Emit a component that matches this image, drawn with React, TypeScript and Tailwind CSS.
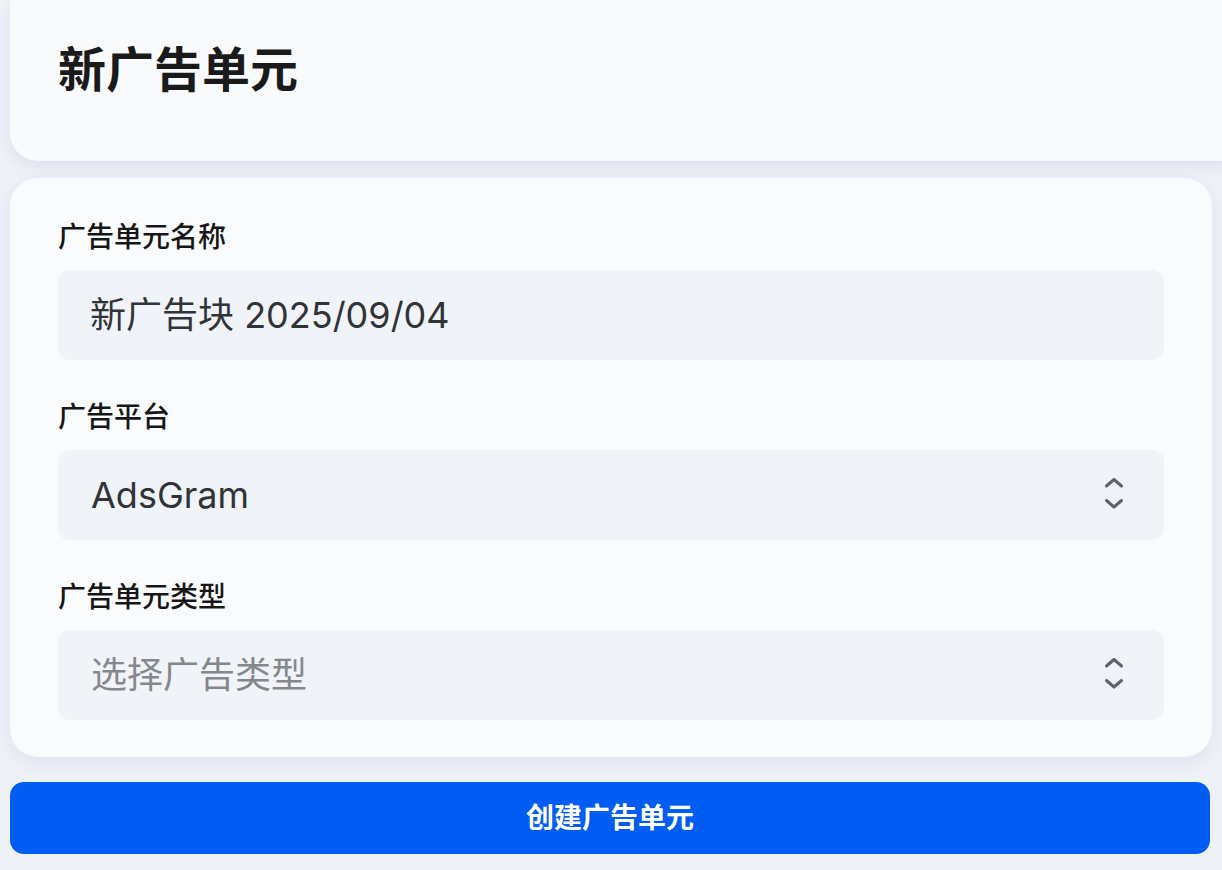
import React from "react";

function Chevrons() {
  return (
    <svg width="22" height="40" viewBox="0 0 22 40" fill="none" className="shrink-0 -mt-[4px]">
      <path d="M3.5 13 L11 6.5 L18.5 13" stroke="#5f6268" strokeWidth="3" strokeLinecap="round" strokeLinejoin="round" />
      <path d="M3.5 27.5 L11 34 L18.5 27.5" stroke="#5f6268" strokeWidth="3" strokeLinecap="round" strokeLinejoin="round" />
    </svg>
  );
}

function Field({ label, children }: { label: string; children: React.ReactNode }) {
  return (
    <div className="flex flex-col gap-[16px]">
      <div className="text-[28px] leading-[34px] font-medium text-[#161616]">{label}</div>
      {children}
    </div>
  );
}

export default function App() {
  return (
    <div
      className="w-[1222px] h-[870px] overflow-hidden bg-[#eef1f6]"
      style={{ fontFamily: 'Inter, "Noto Sans CJK SC", "Noto Sans", sans-serif' }}
    >
      <div className="ml-[10px] w-[1240px] h-[161px] rounded-b-[28px] bg-[#f8fafc] shadow-[0_6px_16px_rgba(40,70,160,0.08)] pl-[48px] pt-[45px]">
        <h1 className="text-[48px] leading-[50px] font-bold text-[#1a1a1a]">新广告单元</h1>
      </div>
      <div className="mt-[17px] mx-[10px] rounded-[28px] bg-[#f9fbfd] shadow-[0_6px_18px_rgba(40,70,160,0.08)] pt-[42px] pb-[37px] px-[48px] flex flex-col gap-[40px]">
        <Field label="广告单元名称">
          <div className="h-[90px] rounded-[12px] bg-[#f0f3f7] flex items-center px-[32px] text-[36px] text-[#303338]">
            新广告块 2025/09/04
          </div>
        </Field>
        <Field label="广告平台">
          <div className="h-[90px] rounded-[12px] bg-[#f0f3f7] flex items-center justify-between pl-[33px] pr-[39px] text-[36px] text-[#303338]">
            <span>AdsGram</span>
            <Chevrons />
          </div>
        </Field>
        <Field label="广告单元类型">
          <div className="h-[90px] rounded-[12px] bg-[#f0f3f7] flex items-center justify-between pl-[33px] pr-[39px] text-[36px] text-[#85878c]">
            <span>选择广告类型</span>
            <Chevrons />
          </div>
        </Field>
      </div>
      <button className="mt-[25px] mx-[10px] w-[1200px] h-[72px] rounded-[14px] bg-[#005cf2] text-white text-[28px] font-semibold flex items-center justify-center">
        创建广告单元
      </button>
    </div>
  );
}
